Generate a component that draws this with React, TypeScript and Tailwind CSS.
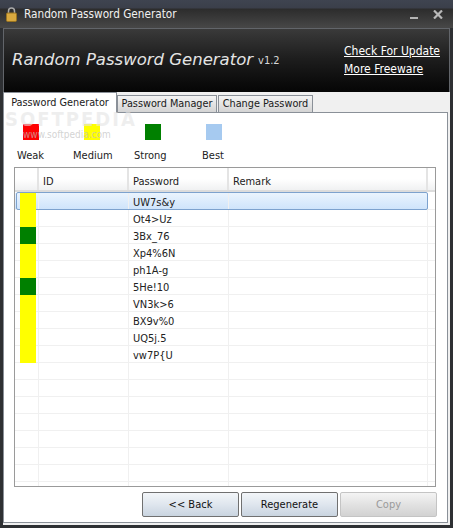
import { FC } from "react";

const font = "[font-family:'DejaVu_Sans_Condensed','Noto_Sans',sans-serif]";
const selectedBg = "bg-gradient-to-b from-[#eaf4fe] to-[#cfe4fb]";

const rows: { color: string; password: string }[] = [
  { color: "bg-[#ffff00]", password: "UW7s&y" },
  { color: "bg-[#ffff00]", password: "Ot4>Uz" },
  { color: "bg-[#008000]", password: "3Bx_76" },
  { color: "bg-[#ffff00]", password: "Xp4%6N" },
  { color: "bg-[#ffff00]", password: "ph1A-g" },
  { color: "bg-[#008000]", password: "5He!10" },
  { color: "bg-[#ffff00]", password: "VN3k>6" },
  { color: "bg-[#ffff00]", password: "BX9v%0" },
  { color: "bg-[#ffff00]", password: "UQ5j.5" },
  { color: "bg-[#ffff00]", password: "vw7P{U" },
];

const LockIcon: FC = () => (
  <svg width="11" height="15" viewBox="0 0 11 15" className="shrink-0">
    <path d="M2.5 7V4a3 3 0 0 1 6 0v3" fill="none" stroke="#a9a9a9" strokeWidth="1.5" />
    <rect x="0.5" y="6" width="10" height="8.5" rx="1.2" fill="#d9a93f" stroke="#9a7420" />
  </svg>
);

const Row: FC<{ color?: string; password?: string; selected?: boolean }> = ({ color, password, selected }) => (
  <div className="flex h-[17px] shrink-0 border-b border-[#f0f0f0] text-[11px] leading-[20px] text-[#222]">
    <div className={`w-[24px] shrink-0 border-r border-[#f0f0f0] pl-[5px] ${selected ? selectedBg : ""}`}>
      {color && <div className={`relative z-10 h-[17px] w-4 ${color}`} />}
    </div>
    <div className={`w-[90px] shrink-0 border-r border-[#f0f0f0] ${selected ? selectedBg : ""}`} />
    <div className={`w-[100px] shrink-0 border-r border-[#f0f0f0] pl-[4px] ${selected ? selectedBg : ""}`}>
      {password}
    </div>
    <div className={`w-[199px] shrink-0 border-r border-[#f0f0f0] ${selected ? selectedBg : ""}`} />
    <div className="flex-1" />
  </div>
);

const Btn: FC<{ label: string; disabled?: boolean }> = ({ label, disabled }) => (
  <button
    className={`flex h-[25px] w-[97px] items-center justify-center rounded-[2px] border pt-[1px] text-[11px] ${
      disabled
        ? "border-[#c4c4c4] bg-gradient-to-b from-[#f4f4f4] via-[#e2e2e2] to-[#d2d2d2] text-[#9a9a9a]"
        : "border-[#707070] bg-gradient-to-b from-[#f3f6f9] via-[#dfe6ee] to-[#c9d4e0] text-[#111]"
    }`}
  >
    {label}
  </button>
);

export default function App() {
  return (
    <div className={`flex h-[528px] w-[453px] flex-col overflow-hidden bg-[#2e3033] ${font}`}>
      {/* title bar */}
      <div className="flex h-[28px] shrink-0 items-center bg-[linear-gradient(#3f4450_0,#3b3f4a_8px,#2c2c2c_9px,#464646_27px)] pl-[6px] pr-[10px] pt-[1px]">
        <LockIcon />
        <span className="ml-[7px] text-[11.7px] text-[#f0f0f0]">Random Password Generator</span>
        <span className="ml-auto flex items-center gap-[15px]">
          <span className="mt-[7px] block h-[2px] w-[8px] bg-[#b4b4b4]" />
          <svg width="10" height="9" viewBox="0 0 10 9">
            <path d="M1 .5l8 8M9 .5l-8 8" stroke="#b8b8b8" strokeWidth="2.2" />
          </svg>
        </span>
      </div>

      <div className="mx-[3px] mb-[3px] flex min-h-0 flex-1 flex-col">
        {/* banner */}
        <div className="flex h-[64px] shrink-0 items-center border-x border-t border-[#62656a] bg-gradient-to-b from-[#3a3a3a] via-[#1c1c1c] to-[#060606] pl-[8px] pr-[6px]">
          <span className="text-[16.5px] italic leading-none text-[#e4e4e4] [font-family:'DejaVu_Sans',sans-serif]">
            Random Password Generator
          </span>
          <span className="ml-[5px] mt-[2px] text-[11px] text-[#d8d8d8]">v1.2</span>
          <div className="ml-auto flex w-[99px] flex-col gap-[3px] whitespace-nowrap text-[12px] leading-[15px] text-white underline">
            <span>Check For Update</span>
            <span>More Freeware</span>
          </div>
        </div>

        {/* tabs */}
        <div className="flex min-h-0 flex-1 flex-col bg-[#f0f0f0]">
          <div className="relative z-10 flex h-[20px] shrink-0 items-end text-[10.8px] text-[#1a1a1a]">
            <div className="mb-[-1px] flex h-[21px] w-[114px] items-center justify-center border border-b-0 border-[#8a9098] bg-white">
              Password Generator
            </div>
            <div className="flex h-[17px] w-[100px] items-center justify-center border border-b-0 border-[#8a9098] bg-gradient-to-b from-[#f4f4f4] to-[#d4d4d4] pt-[1px]">
              Password Manager
            </div>
            <div className="ml-[1px] flex h-[17px] w-[95px] items-center justify-center border border-b-0 border-[#8a9098] bg-gradient-to-b from-[#f4f4f4] to-[#d4d4d4] pt-[1px]">
              Change Password
            </div>
          </div>

          {/* tab panel */}
          <div className="relative mb-[2px] mr-[2px] flex min-h-0 flex-1 flex-col border border-[#8a9098] bg-white">
            <div className="flex shrink-0 gap-[45px] pl-[19px] pt-[11px]">
              <div className="h-4 w-4 bg-[#ff0000]" />
              <div className="h-4 w-4 bg-[#ffff00]" />
              <div className="h-4 w-4 bg-[#008000]" />
              <div className="h-4 w-4 bg-[#a6caf0]" />
            </div>
            <div className="mt-[7px] flex h-[16px] shrink-0 pl-[13px] text-[11px] leading-[18px] text-[#222]">
              <span className="w-[56px]">Weak</span>
              <span className="w-[61px]">Medium</span>
              <span className="w-[68px]">Strong</span>
              <span>Best</span>
            </div>

            {/* grid */}
            <div className="ml-[10px] mt-[4px] flex h-[320px] w-[422px] shrink-0 flex-col overflow-hidden border border-[#9a9a9a]">
              <div className="flex h-[24px] shrink-0 border-b-2 border-[#dcdcdc] bg-gradient-to-b from-white via-white to-[#f0f1f2] text-[11px] leading-[28px] text-[#222]">
                <div className="w-[24px] shrink-0 border-r-2 border-[#e4e4e4]" />
                <div className="w-[90px] shrink-0 border-r-2 border-[#e4e4e4] pl-[4px]">ID</div>
                <div className="w-[100px] shrink-0 border-r-2 border-[#e4e4e4] pl-[4px]">Password</div>
                <div className="w-[199px] shrink-0 border-r-2 border-[#e4e4e4] pl-[4px]">Remark</div>
                <div className="flex-1" />
              </div>
              <div className="relative flex min-h-0 flex-1 flex-col pt-[1px]">
                {rows.map((r, i) => (
                  <Row key={r.password} color={r.color} password={r.password} selected={i === 0} />
                ))}
                {Array.from({ length: 8 }).map((_, i) => (
                  <Row key={i} />
                ))}
                <div className="absolute left-px right-[7px] top-0 h-[18px] rounded-[2px] border border-[#7da2ce]" />
              </div>
            </div>

            {/* buttons */}
            <div className="mt-[5px] flex justify-end gap-[2px] pr-[10px]">
              <Btn label="<< Back" />
              <Btn label="Regenerate" />
              <Btn label="Copy" disabled />
            </div>

            {/* softpedia watermark */}
            <span className="pointer-events-none absolute left-[1px] top-[-9px] z-20 text-[20px] font-bold tracking-[2px] text-[#e4e4e4]/60">
              SOFTPEDIA
            </span>
            <span className="pointer-events-none absolute left-[19px] top-[14px] text-[10px] text-[#c0c0c0]/70">
              www.softpedia.com
            </span>
          </div>
        </div>
      </div>
    </div>
  );
}
